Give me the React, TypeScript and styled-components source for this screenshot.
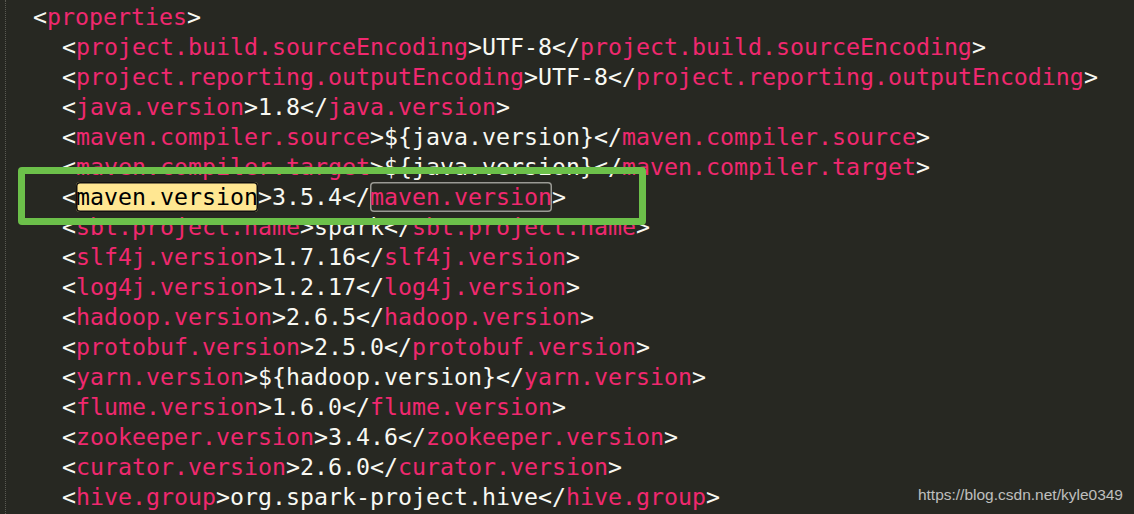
import React from 'react';
import styled, { createGlobalStyle } from 'styled-components';

const GlobalStyle = createGlobalStyle`
  html, body {
    margin: 0;
    padding: 0;
    background: #272822;
  }
`;

type Line = {
  indent: number;
  tag: string;
  value?: string;
  open?: boolean;
  focus?: boolean;
};

const lines: Line[] = [
  { indent: 0, tag: 'properties', open: true },
  { indent: 1, tag: 'project.build.sourceEncoding', value: 'UTF-8' },
  { indent: 1, tag: 'project.reporting.outputEncoding', value: 'UTF-8' },
  { indent: 1, tag: 'java.version', value: '1.8' },
  { indent: 1, tag: 'maven.compiler.source', value: '${java.version}' },
  { indent: 1, tag: 'maven.compiler.target', value: '${java.version}' },
  { indent: 1, tag: 'maven.version', value: '3.5.4', focus: true },
  { indent: 1, tag: 'sbt.project.name', value: 'spark' },
  { indent: 1, tag: 'slf4j.version', value: '1.7.16' },
  { indent: 1, tag: 'log4j.version', value: '1.2.17' },
  { indent: 1, tag: 'hadoop.version', value: '2.6.5' },
  { indent: 1, tag: 'protobuf.version', value: '2.5.0' },
  { indent: 1, tag: 'yarn.version', value: '${hadoop.version}' },
  { indent: 1, tag: 'flume.version', value: '1.6.0' },
  { indent: 1, tag: 'zookeeper.version', value: '3.4.6' },
  { indent: 1, tag: 'curator.version', value: '2.6.0' },
  { indent: 1, tag: 'hive.group', value: 'org.spark-project.hive' },
];

const Editor = styled.div`
  position: relative;
  display: flex;
  height: 514px;
  overflow: hidden;
  background: #272822;
  padding-left: 5px;
  box-sizing: border-box;
  font-family: 'DejaVu Sans Mono', 'Liberation Mono', monospace;
  font-size: 23.25px;
  color: #f8f8f2;
`;

// dotted indent guide on the left edge, the code column starts after it
const Code = styled.div`
  flex: 1;
  display: flex;
  flex-direction: column;
  padding: 2px 0 0 27px;
  border-left: 1px dotted #5a5a52;
`;

const Row = styled.div<{ $indent: number }>`
  height: 30px;
  line-height: 30px;
  white-space: pre;
  padding-left: ${(p) => p.$indent * 29}px;
`;

const Name = styled.span`
  color: #f0286f;
`;

const FindMatch = styled.span`
  display: inline-block;
  height: 30px;
  line-height: 30px;
  vertical-align: top;
  background: #ffe792;
  color: #000;
  border-radius: 4px;
  box-shadow: inset 0 0 0 1.5px #111;
`;

const MatchTag = styled.span`
  display: inline-block;
  height: 30px;
  line-height: 30px;
  vertical-align: top;
  color: #f0286f;
  border-radius: 4px;
  box-shadow: inset 0 0 0 1.5px #9a9a94;
`;

// green annotation frame drawn over the code
const Callout = styled.div`
  position: absolute;
  left: 18px;
  top: 167px;
  width: 628px;
  height: 58px;
  box-sizing: border-box;
  border: 7px solid #6cc04a;
  border-radius: 4px;
`;

const Watermark = styled.div`
  position: absolute;
  right: 11px;
  bottom: 10px;
  font-family: 'Liberation Sans', Arial, sans-serif;
  font-size: 15.5px;
  color: rgba(235, 235, 235, 0.78);
`;

const CodeLine = ({ line }: { line: Line }) => {
  if (line.open) {
    return (
      <Row $indent={line.indent}>
        {'<'}<Name>{line.tag}</Name>{'>'}
      </Row>
    );
  }
  if (line.focus) {
    return (
      <Row $indent={line.indent}>
        {'<'}<FindMatch>{line.tag}</FindMatch>{'>'}{line.value}{'</'}<MatchTag>{line.tag}</MatchTag>{'>'}
      </Row>
    );
  }
  return (
    <Row $indent={line.indent}>
      {'<'}<Name>{line.tag}</Name>{'>'}{line.value}{'</'}<Name>{line.tag}</Name>{'>'}
    </Row>
  );
};

const App = () => (
  <>
    <GlobalStyle />
    <Editor>
      <Code>
        {lines.map((line, i) => (
          <CodeLine key={i} line={line} />
        ))}
      </Code>
      <Callout />
      <Watermark>https://blog.csdn.net/kyle0349</Watermark>
    </Editor>
  </>
);

export default App;
